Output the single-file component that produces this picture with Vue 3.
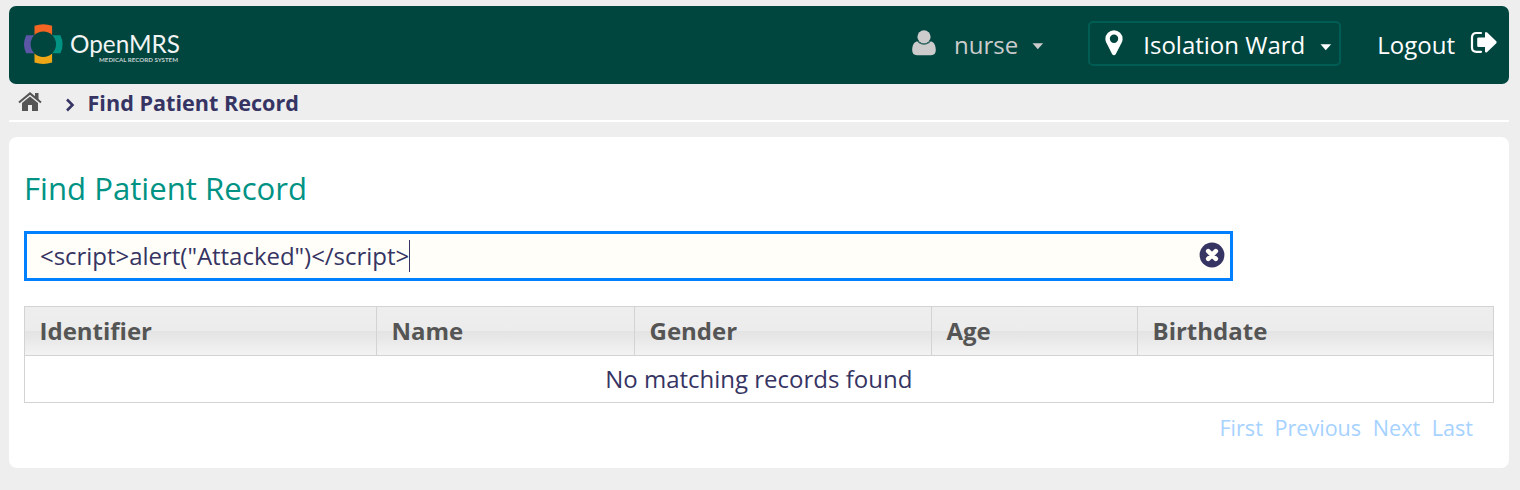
<script setup>
const columns = [
  { label: 'Identifier', width: 352 },
  { label: 'Name', width: 258 },
  { label: 'Gender', width: 297 },
  { label: 'Age', width: 206 },
  { label: 'Birthdate', width: 356 },
]
const pages = ['First', 'Previous', 'Next', 'Last']
</script>

<template>
  <div class="page">
    <header class="topbar">
      <svg class="logo" width="160" height="44" viewBox="0 0 160 44">
        <path fill="#f26522" d="M10.500 3.800Q19.300.8 28.100 3.800V15H10.500Z" />
        <path fill="#eea616" d="M10.500 40.600Q19.300 43.400 28.100 40.600V29H10.500Z" />
        <path fill="#5b57a6" d="M2.200 13.300Q-2.200 22.300 2.200 31.300H10.500V13.300Z" />
        <path fill="#009384" d="M36.400 13.300Q40.800 22.300 36.400 31.300H28.100V13.300Z" />
        <circle cx="19.300" cy="22.300" r="12.700" fill="#00463f" />
        <text class="brand" x="46" y="31.300" textLength="110" lengthAdjust="spacingAndGlyphs">OpenMRS</text>
        <text class="tagline" x="75" y="40.300" textLength="79" lengthAdjust="spacingAndGlyphs">MEDICAL RECORD SYSTEM</text>
      </svg>
      <nav class="actions">
        <a class="user">
          <svg width="24" height="26" viewBox="0 0 24 26" fill="#ccc">
            <circle cx="12" cy="6.800" r="6.600" />
            <path d="M6 11.200C1.600 11.700.2 15.500.2 20.300C.2 23.500 2 25.200 4.800 25.200H19.200C22 25.200 23.800 23.500 23.800 20.300C23.800 15.500 22.400 11.700 18 11.200C14.500 14.700 9.500 14.700 6 11.200Z" />
            <path d="M5.400 11.300C9 15.200 15 15.200 18.600 11.300" fill="none" stroke="#00463f" stroke-width=".8" />
          </svg>
          <span class="user-name">nurse</span>
          <svg class="caret" width="12" height="7" viewBox="0 0 12 7"><path d="M.5.3H11.100L5.800 6.200Z" fill="#ccc" /></svg>
        </a>
        <a class="location">
          <svg width="18" height="26" viewBox="0 0 18 26">
            <path fill="#fff" fill-rule="evenodd" d="M9 .2A8.600 8.600 0 0 0 .4 8.800C.4 10.600.8 11.700 1.500 13.100L7.200 24.200Q9 26.200 10.700 24.200L16.500 13.100C17.200 11.700 17.600 10.600 17.600 8.800A8.600 8.600 0 0 0 9 .2ZM9 4.500A4.200 4.200 0 1 1 9 12.900A4.200 4.200 0 1 1 9 4.500Z" />
          </svg>
          <span class="location-name">Isolation Ward</span>
          <svg class="caret" width="12" height="7" viewBox="0 0 12 7"><path d="M.5.3H11.100L5.800 6.200Z" fill="#fff" /></svg>
        </a>
        <a class="logout">
          <span class="logout-text">Logout</span>
          <svg width="28" height="24" viewBox="0 0 28 24">
            <path d="M11 2H6.500Q2 2 2 6.500V16.500Q2 20.800 6.500 20.800H11" fill="none" stroke="#fff" stroke-width="2.200" stroke-linecap="round" />
            <path d="M8.500 6.500H15V2Q15.500.2 17.200 1.500L26.300 10.300Q27.100 11.300 26.300 12.300L17.200 21Q15.500 22.300 15 20.500V16H8.500Q7.200 16 7.200 14.700V7.800Q7.200 6.500 8.500 6.500Z" fill="#fff" />
          </svg>
        </a>
      </nav>
    </header>

    <nav class="breadcrumbs">
      <svg class="home" width="24" height="20" viewBox="0 0 24 20">
        <path d="M1 10.600L12 1.400L23 10.600" fill="none" stroke="#555" stroke-width="2" />
        <path d="M17 1H20.500V8.500L17 5.500Z" fill="#555" />
        <path d="M12 4.400L20 11V19H14V13H10V19H4V11Z" fill="#555" />
      </svg>
      <svg class="chevron" width="10" height="14" viewBox="0 0 10 14">
        <path d="M2 1.500L7.500 7L2 12.500" fill="none" stroke="#363463" stroke-width="2.600" />
      </svg>
      <span class="crumb">Find Patient Record</span>
    </nav>

    <main class="card">
      <h2>Find Patient Record</h2>
      <div class="search">
        <span class="query">&lt;script&gt;alert("Attacked")&lt;/script&gt;</span>
        <svg class="clear" width="26" height="26" viewBox="0 0 26 26">
          <circle cx="13" cy="13" r="12.400" fill="#363463" />
          <path d="M9.200 9.200L16.800 16.800M16.800 9.200L9.200 16.800" stroke="#fffef8" stroke-width="4.600" stroke-linecap="round" />
        </svg>
      </div>
      <table>
        <colgroup>
          <col v-for="c in columns" :key="c.label" :style="{ width: c.width + 'px' }" />
        </colgroup>
        <thead>
          <tr><th v-for="c in columns" :key="c.label">{{ c.label }}</th></tr>
        </thead>
        <tbody>
          <tr><td colspan="5">No matching records found</td></tr>
        </tbody>
      </table>
      <div class="pager">
        <a v-for="p in pages" :key="p">{{ p }}</a>
      </div>
    </main>
  </div>
</template>

<style>
body {
  background: #eee;
}
</style>

<style scoped>
.page {
  box-sizing: border-box;
  width: 1520px;
  height: 490px;
  padding: 6px 11px 0 9px;
  font-family: "Open Sans", sans-serif;
  font-size: 24px;
  color: #363463;
  white-space: nowrap;
  overflow: hidden;
}
.topbar {
  box-sizing: border-box;
  height: 78px;
  padding: 0 11px 0 15px;
  display: flex;
  align-items: center;
  justify-content: space-between;
  background: #00463f;
  border-radius: 7px;
}
.logo {
  margin-top: -2px;
}
.brand {
  font: 24.500px Lato, sans-serif;
  fill: #f2f4f3;
}
.tagline {
  font: bold 5.800px Lato, sans-serif;
  fill: #c4d2cf;
}
.actions,
.user,
.location,
.logout {
  display: flex;
  align-items: center;
}
.actions {
  line-height: 34px;
  color: #fff;
  margin-top: -4px;
}
.user {
  color: #ccc;
  margin-right: 44px;
}
.user > svg:first-child {
  margin-right: 18px;
}
.user .caret {
  margin: 7px 0 0 14px;
}
.user-name,
.location-name,
.logout-text {
  padding-top: 4px;
}
.location {
  box-sizing: border-box;
  width: 253px;
  height: 45px;
  padding: 0 7px 0 14.500px;
  border: 2px solid #005d53;
  border-radius: 5px;
  margin-right: 36px;
}
.location > svg:first-child {
  margin: -1px 20.500px 0 0;
}
.location .caret {
  margin: 8px 0 0 auto;
}
.logout svg {
  margin: 0 0 0 15px;
}
.breadcrumbs {
  box-sizing: border-box;
  height: 38px;
  display: flex;
  align-items: center;
  padding-left: 9px;
  border-bottom: 2px solid #fff;
}
.home {
  margin-right: 22.500px;
}
.chevron {
  margin: 5px 13px 0 0;
}
.crumb {
  font-size: 21.600px;
  font-weight: 700;
}
.card {
  box-sizing: border-box;
  height: 331px;
  margin-top: 15px;
  padding: 31px 15px 0;
  background: #fff;
  border-radius: 8px;
}
h2 {
  margin: 0;
  height: 63px;
  line-height: 40px;
  font-size: 31.150px;
  font-weight: 400;
  color: #009384;
}
.search {
  box-sizing: border-box;
  width: 1209px;
  height: 50px;
  display: flex;
  align-items: center;
  justify-content: space-between;
  padding: 0 5px 0 13px;
  background: #fffef8;
  border: 3px solid #007fff;
}
.query {
  height: 32px;
  line-height: 32px;
  letter-spacing: -.03px;
  border-right: 1px solid #363463;
}
.clear {
  margin-top: -3px;
}
table {
  width: 1470px;
  margin-top: 25px;
  table-layout: fixed;
  border-collapse: separate;
  border-spacing: 0;
  border: 1px solid #d3d3d3;
  border-width: 1px 0 0 1px;
}
th,
td {
  box-sizing: border-box;
  padding: 0 15px 2px 14.500px;
  border-right: 1px solid #d3d3d3;
  border-bottom: 1px solid #d3d3d3;
}
th {
  height: 49px;
  text-align: left;
  color: #555;
  background: linear-gradient(#eee 0%, #ececec 50%, #e3e3e3 50%, #f3f3f3 100%);
}
td {
  height: 47px;
  text-align: center;
}
.pager {
  display: flex;
  justify-content: flex-end;
  gap: 11.600px;
  margin-top: 9px;
  padding-right: 21px;
  font-size: 21.600px;
  line-height: 32px;
  color: #a6d2ff;
}
</style>
